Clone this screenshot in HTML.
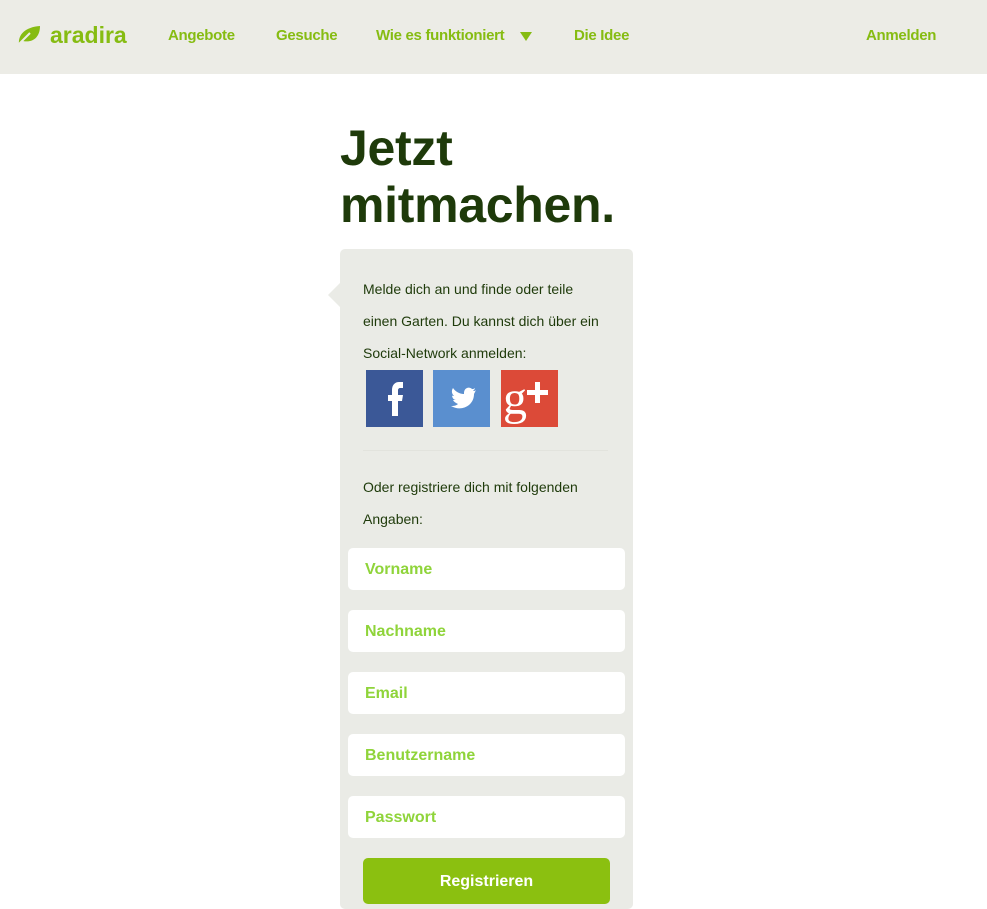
<!DOCTYPE html>
<html><head><meta charset="utf-8"><style>
*{margin:0;padding:0;box-sizing:border-box}
body{width:987px;height:902px;overflow:hidden;background:#fff;font-family:"Liberation Sans",sans-serif;position:relative}
.nav{position:absolute;left:0;top:0;width:987px;height:74px;background:#ecece6}
.nav a{position:absolute;top:27px;font-size:15px;font-weight:bold;color:#86bc12;text-decoration:none;letter-spacing:-0.3px}
.logo{position:absolute;left:50px;top:22px;font-size:23px;font-weight:bold;color:#86bc12}
h1{position:absolute;left:340px;top:120px;font-size:50px;line-height:57px;color:#1e3a0a;font-weight:bold;letter-spacing:-0.3px}
.panel{position:absolute;left:340px;top:249px;width:293px;height:660px;background:#eaebe6;border-radius:5px}
.arrow{position:absolute;left:328px;top:283px;width:0;height:0;border-top:12px solid transparent;border-bottom:12px solid transparent;border-right:12px solid #eaebe6}
.t{position:absolute;left:363px;font-size:14px;color:#1e3a0a;line-height:32px}
.soc{position:absolute;top:370px;width:57px;height:57px}
.hr{position:absolute;left:363px;top:450px;width:245px;height:1px;background:#e2e3dd}
.in{position:absolute;left:348px;width:277px;height:42px;background:#fff;border-radius:5px;font-size:16px;color:#8fd43a;padding:13px 17px 0;font-weight:bold}
.btn{position:absolute;left:363px;top:858px;width:247px;height:46px;background:#8bc010;border-radius:5px;color:#fff;font-weight:bold;font-size:16px;text-align:center;line-height:48px}
</style></head><body>
<div class="nav">
<svg style="position:absolute;left:16px;top:24px" width="26" height="22" viewBox="0 0 26 22"><path d="M3 20 C2 10 10 3 24 2 C24 14 16 19 7 17 Z" fill="#86bc12"/><path d="M2 21 L14 9" stroke="#ecece6" stroke-width="2"/></svg>
<div class="logo">aradira</div>
<a style="left:168px">Angebote</a>
<a style="left:276px">Gesuche</a>
<a style="left:376px">Wie es funktioniert</a>
<svg style="position:absolute;left:520px;top:32px" width="12" height="9"><path d="M0 0H12L6 9Z" fill="#86bc12"/></svg>
<a style="left:574px">Die Idee</a>
<a style="left:866px">Anmelden</a>
</div>
<h1>Jetzt<br>mitmachen.</h1>
<div class="panel"></div><div class="arrow"></div>
<div class="t" style="top:273px">Melde dich an und finde oder teile<br>einen Garten. Du kannst dich über ein<br>Social-Network anmelden:</div>
<svg class="soc" style="left:366px" viewBox="0 0 57 57"><rect width="57" height="57" fill="#3b5897"/><path d="M26 46V31h-4v-6h4v-5c0-5 3-8 7-8h4v6h-3c-1 0-2 1-2 2v5h5l-1 6h-4v15z" fill="#fff"/></svg>
<svg class="soc" style="left:433px" viewBox="0 0 57 57"><rect width="57" height="57" fill="#5a8fcf"/><path d="M43 20c-1 1-2 1-3 1 1-1 2-2 2-3-1 1-2 1-3 1-3-3-8-1-8 4v1c-5 0-9-3-11-6-2 3-1 6 1 8-1 0-2 0-2-1 0 3 2 5 4 5h-3c1 2 3 3 5 4-2 2-5 2-7 2 10 6 23 0 23-12z" fill="#fff"/></svg>
<svg class="soc" style="left:501px" viewBox="0 0 57 57"><rect width="57" height="57" fill="#dc4a38"/><text x="2" y="44" font-family="Liberation Serif,serif" font-size="48" fill="#fff">g</text><path d="M34 12h5v8h8v5h-8v8h-5v-8h-8v-5h8z" fill="#fff"/></svg>
<div class="hr"></div>
<div class="t" style="top:471px">Oder registriere dich mit folgenden<br>Angaben:</div>
<div class="in" style="top:548px">Vorname</div>
<div class="in" style="top:610px">Nachname</div>
<div class="in" style="top:672px">Email</div>
<div class="in" style="top:734px">Benutzername</div>
<div class="in" style="top:796px">Passwort</div>
<div class="btn">Registrieren</div>
</body></html>
